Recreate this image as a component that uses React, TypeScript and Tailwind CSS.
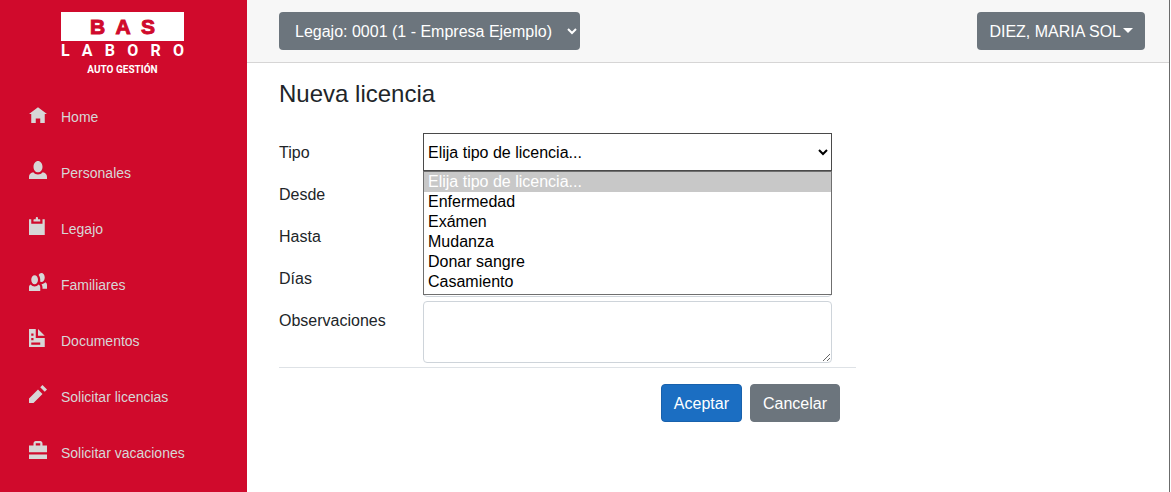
import { useState } from "react";

type NavItem = { label: string; path: string };

const navItems: NavItem[] = [
  { label: "Home", path: "M4 1l-4 3h1v4h2v-2h2v2h2v-4.03l1 .03-4-3z" },
  {
    label: "Personales",
    path: "M4 0c-1.1 0-2 1.12-2 2.5s.9 2.5 2 2.5 2-1.12 2-2.5-.9-2.5-2-2.5zm-2.09 5c-1.06.05-1.91.92-1.91 2v1h8v-1c0-1.08-.84-1.95-1.91-2-.54.61-1.28 1-2.09 1-.81 0-1.55-.39-2.09-1z",
  },
  {
    label: "Legajo",
    path: "M3.5 0c-.28 0-.5.22-.5.5v.5h-.75c-.14 0-.25.11-.25.25v.75h3v-.75c0-.14-.11-.25-.25-.25h-.75v-.5c0-.28-.22-.5-.5-.5zm-3.5 1v7h7v-7h-1v2h-5v-2h-1z",
  },
  {
    label: "Familiares",
    path: "M5.5 0c-.51 0-.95.35-1.22.88.45.54.72 1.28.72 2.13 0 .29-.03.55-.09.81.19.11.38.19.59.19.83 0 1.5-.9 1.5-2s-.67-2-1.5-2zm-3 1c-.83 0-1.5.9-1.5 2s.67 2 1.5 2 1.5-.9 1.5-2-.67-2-1.5-2zm4.75 3.16c-.43.51-1.02.82-1.69.84.27.38.44.84.44 1.34v.66h2v-1.66c0-.52-.31-.97-.75-1.19zm-6.5 1c-.44.22-.75.67-.75 1.19v1.66h5v-1.66c0-.52-.31-.97-.75-1.19-.45.53-1.06.84-1.75.84s-1.3-.32-1.75-.84z",
  },
  {
    label: "Documentos",
    path: "M0 0v8h7v-4h-4v-4h-3zm4 0v3h3l-3-3zm-3 2h1v1h-1v-1zm0 2h1v1h-1v-1zm0 2h4v1h-4v-1z",
  },
  { label: "Solicitar licencias", path: "M6 0l-1 1 2 2 1-1-2-2zm-2 2l-4 4v2h2l4-4-2-2z" },
  {
    label: "Solicitar vacaciones",
    path: "M3 0c-.55 0-1 .45-1 1v1h-2v3h8v-3h-2v-1c0-.55-.45-1-1-1h-2zm0 1h2v1h-2v-1zm-3 5v2h8v-2h-8z",
  },
];

const tipos = ["Elija tipo de licencia...", "Enfermedad", "Exámen", "Mudanza", "Donar sangre", "Casamiento"];

function Logo() {
  return (
    <div className="ml-[61px] flex w-[123px] flex-col text-white">
      <div className="flex h-[29px] items-center justify-between bg-white px-[29px] font-['Liberation_Sans',sans-serif] text-[21px] font-black text-[#d00a2c] [-webkit-text-stroke:1px_#d00a2c]">
        <span>B</span>
        <span>A</span>
        <span>S</span>
      </div>
      <div className="flex h-5 items-center justify-between font-['Roboto',sans-serif] text-base font-bold">
        {"LABORO".split("").map((c, i) => (
          <span key={i}>{c}</span>
        ))}
      </div>
      <div className="flex h-4 items-center justify-center font-['Roboto',sans-serif] text-[10px] font-bold">AUTO GESTIÓN</div>
    </div>
  );
}

function Field({ id, label, children }: { id: string; label: string; children: React.ReactNode }) {
  return (
    <div className="flex items-start">
      <label htmlFor={id} className="w-36 shrink-0 pt-2 pb-1.5 leading-6">
        {label}
      </label>
      <div className="relative min-w-0 flex-1">{children}</div>
    </div>
  );
}

const inputClass = "block h-[38px] w-full rounded border border-[#ced4da] bg-white px-3";

export default function App() {
  const [tipo, setTipo] = useState(tipos[0]);
  return (
    <div className="flex min-h-screen bg-white font-['Liberation_Sans',Arial,sans-serif] text-base text-[#212529]">
      <aside className="w-[247px] shrink-0 bg-[#d00a2c] pt-3">
        <Logo />
        <nav className="mt-3">
          <ul>
            {navItems.map((n) => (
              <li key={n.label} className="h-14">
                <a href="#" className="flex h-14 items-center gap-[14px] pl-[29px] text-sm text-[#d7d7d7]">
                  <svg viewBox="0 0 8 8" className="mb-1.5 size-[18px]" fill="currentColor" aria-hidden="true">
                    <path d={n.path} fillRule="evenodd" />
                  </svg>
                  {n.label}
                </a>
              </li>
            ))}
          </ul>
        </nav>
      </aside>
      <div className="mr-px flex min-w-0 flex-1 flex-col border-r border-[#6b6b6b]">
        <header className="flex h-[63px] items-center justify-between border-b border-[#d6d5d5] bg-[#f7f7f7] pr-6 pl-8">
          <select aria-label="Legajo" className="h-[38px] w-[301px] rounded bg-[#6c757d] pl-3 text-white">
            <option>Legajo: 0001 (1 - Empresa Ejemplo)</option>
          </select>
          <button type="button" className="flex h-[38px] items-center gap-0.5 rounded bg-[#6c757d] px-3 pt-0.5 text-white">
            DIEZ, MARIA SOL
            <span className="mb-1 border-x-[5px] border-t-[5px] border-x-transparent border-t-white" />
          </button>
        </header>
        <main className="px-8 pt-4">
          <form className="max-w-[577px]" onSubmit={(e) => e.preventDefault()}>
            <h1 className="mb-6 text-2xl leading-[30px]">Nueva licencia</h1>
            <div className="flex flex-col gap-1 pr-6">
              <Field id="tipo" label="Tipo">
                <select
                  id="tipo"
                  value={tipo}
                  onChange={(e) => setTipo(e.target.value)}
                  className="block h-[38px] w-full border border-[#4a4a4a] bg-white text-black"
                >
                  {tipos.map((t) => (
                    <option key={t}>{t}</option>
                  ))}
                </select>
                <ul role="listbox" aria-label="Tipo" className="absolute inset-x-0 top-full z-10 border border-[#6f6f6f] bg-white pb-0.5 text-black">
                  {tipos.map((t) => (
                    <li
                      key={t}
                      role="option"
                      aria-selected={t === tipo}
                      onClick={() => setTipo(t)}
                      className={t === tipo ? "bg-[#c8c8c8] px-1 leading-5 text-white" : "px-1 leading-5"}
                    >
                      {t}
                    </li>
                  ))}
                </ul>
              </Field>
              <Field id="desde" label="Desde">
                <input id="desde" className={inputClass} />
              </Field>
              <Field id="hasta" label="Hasta">
                <input id="hasta" className={inputClass} />
              </Field>
              <Field id="dias" label="Días">
                <input id="dias" className={inputClass} />
              </Field>
              <Field id="obs" label="Observaciones">
                <textarea id="obs" className="block h-[62px] w-full rounded border border-[#ced4da] bg-white px-3 py-1.5" />
              </Field>
            </div>
            <div className="mt-1 flex justify-end gap-2 border-t border-[#dee2e6] pt-4 pr-4">
              <button type="submit" className="h-[38px] rounded border border-[#1861ac] bg-[#1b6ec2] px-3 pt-0.5 text-white">
                Aceptar
              </button>
              <button type="button" className="h-[38px] rounded border border-[#6c757d] bg-[#6c757d] px-3 pt-0.5 text-white">
                Cancelar
              </button>
            </div>
          </form>
        </main>
      </div>
    </div>
  );
}
